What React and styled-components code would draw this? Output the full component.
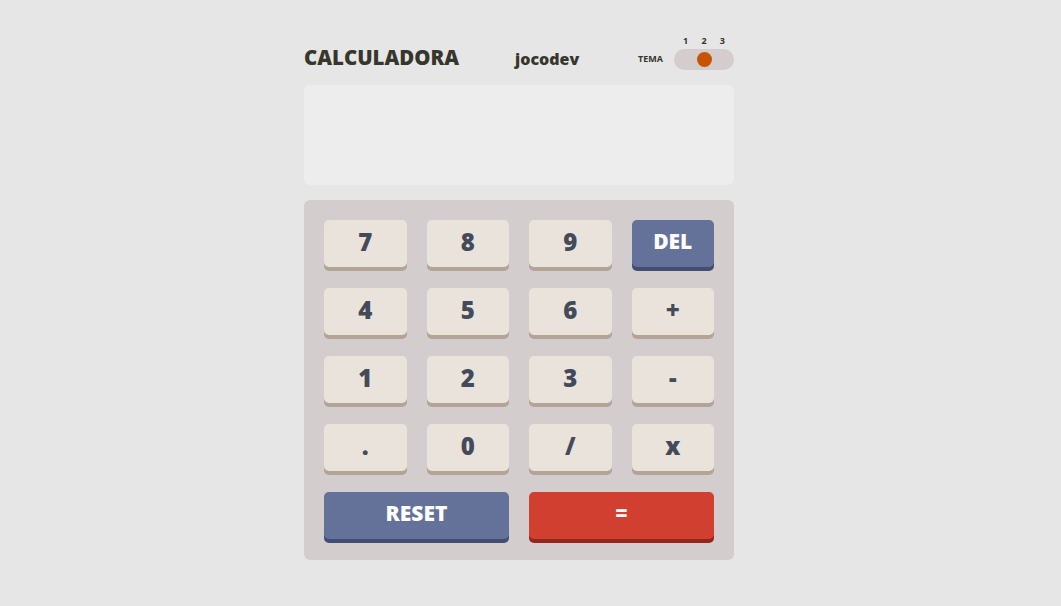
import React from "react";
import styled, { createGlobalStyle } from "styled-components";

const Global = createGlobalStyle`
  html, body { margin: 0; padding: 0; background: #e6e6e6; }
  body { font-family: "Open Sans", "Noto Sans", sans-serif; }
  * { box-sizing: border-box; }
`;

const Page = styled.div`
  display: flex;
  justify-content: center;
  padding: 31px 23px 0 0;
  min-height: 606px;
`;

const Calc = styled.div`
  width: 430px;
  display: flex;
  flex-direction: column;
`;

const Header = styled.header`
  display: flex;
  align-items: center;
  justify-content: space-between;
  height: 48px;
`;

const Title = styled.h1`
  margin: 0;
  font-size: 20.4px;
  font-weight: 800;
  color: #36362c;
  width: 211px;
  padding-top: 4px;
`;

const Brand = styled.span`
  font-size: 16px;
  font-weight: 800;
  color: #36362c;
  flex: 1;
  padding-top: 7px;
`;

const Theme = styled.div`
  display: flex;
  align-items: flex-end;
  gap: 11px;
  padding-bottom: 5px;
`;

const ThemeLabel = styled.span`
  font-size: 9px;
  font-weight: 700;
  color: #36362c;
  padding-bottom: 5px;
`;

const ToggleCol = styled.div`
  display: flex;
  flex-direction: column;
  align-items: stretch;
  gap: 2px;
`;

const Nums = styled.div`
  display: flex;
  justify-content: space-between;
  padding: 0 9px 0 9px;
  font-size: 9px;
  font-weight: 700;
  color: #36362c;
  line-height: 12px;
`;

const Track = styled.div`
  width: 60px;
  height: 21px;
  border-radius: 11px;
  background: #d3cdcd;
  display: flex;
  align-items: center;
  justify-content: center;
`;

const Knob = styled.div`
  width: 15px;
  height: 15px;
  border-radius: 50%;
  background: #c85402;
`;

const Screen = styled.div`
  margin-top: 6px;
  height: 100px;
  border-radius: 6px;
  background: #ededed;
`;

const Pad = styled.div`
  margin-top: 15px;
  background: #d3cdcd;
  border-radius: 6px;
  padding: 20px 20px 21px 20px;
  display: grid;
  grid-template-columns: repeat(4, 1fr);
  column-gap: 20px;
  row-gap: 21px;
`;

const variants = {
  num: { bg: "#eae3dc", sh: "#b3a497", fg: "#434a59", size: "24px" },
  del: { bg: "#647198", sh: "#414e73", fg: "#ffffff", size: "21px" },
  eq: { bg: "#d03f2f", sh: "#93261a", fg: "#ffffff", size: "21px" },
};

const Key = styled.button`
  grid-column: span ${(p) => p.$span || 1};
  height: 47px;
  border: none;
  border-radius: 5px;
  background: ${(p) => variants[p.$v].bg};
  box-shadow: 0 4px 0 ${(p) => variants[p.$v].sh};
  color: ${(p) => variants[p.$v].fg};
  font-family: "Open Sans", "Noto Sans", sans-serif;
  font-weight: 800;
  font-size: ${(p) => variants[p.$v].size};
  line-height: 1;
  padding: 0 0 4px 0;
  display: flex;
  align-items: center;
  justify-content: center;
  cursor: pointer;
`;

const keys = [
  ["7"], ["8"], ["9"], ["DEL", "del"],
  ["4"], ["5"], ["6"], ["+"],
  ["1"], ["2"], ["3"], ["-"],
  ["."], ["0"], ["/"], ["x"],
];

export default function App() {
  return (
    <>
      <Global />
      <Page>
        <Calc>
          <Header>
            <Title>CALCULADORA</Title>
            <Brand>jocodev</Brand>
            <Theme>
              <ThemeLabel>TEMA</ThemeLabel>
              <ToggleCol>
                <Nums>
                  <span>1</span>
                  <span>2</span>
                  <span>3</span>
                </Nums>
                <Track>
                  <Knob />
                </Track>
              </ToggleCol>
            </Theme>
          </Header>
          <Screen />
          <Pad>
            {keys.map(([k, v]) => (
              <Key key={k} $v={v || "num"}>
                {k}
              </Key>
            ))}
            <Key $v="del" $span={2}>RESET</Key>
            <Key $v="eq" $span={2}>=</Key>
          </Pad>
        </Calc>
      </Page>
    </>
  );
}
